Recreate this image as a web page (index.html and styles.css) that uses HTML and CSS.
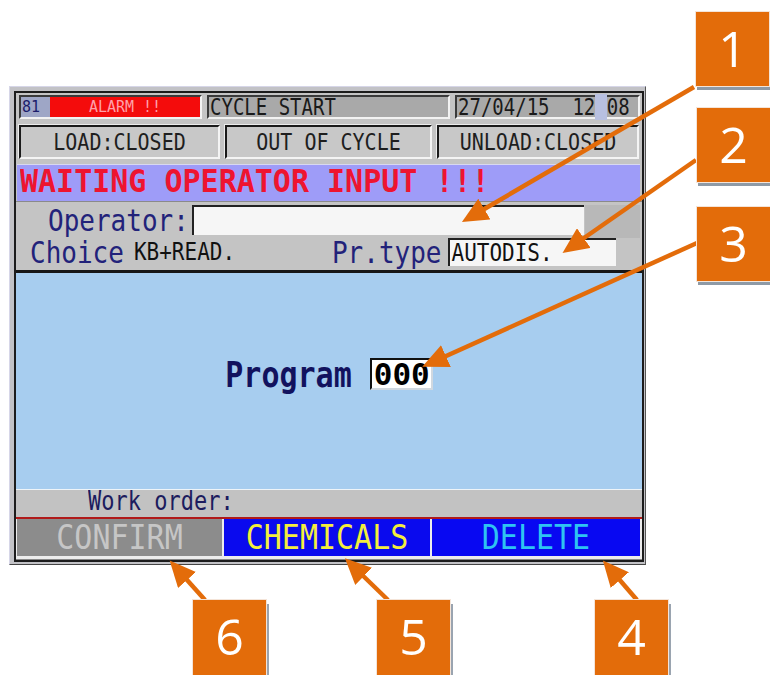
FILE: index.html
```html
<!DOCTYPE html>
<html lang="en">
<head>
	<meta charset="UTF-8">
	<title>Operator input</title>
	<link rel="stylesheet" href="styles.css">
</head>
<body>
	<div class="page">
		<div class="hmi">
			<div class="screen">
				<div class="status">
					<div class="cell cell-alarm"><span class="num">81</span><span class="alarm">ALARM !!</span></div>
					<div class="cell cell-cycle"><span class="tx">CYCLE START</span></div>
					<div class="cell cell-date"><span class="tx">27/04/15&nbsp; 12<span class="blink"> </span>08</span></div>
				</div>
				<div class="doors">
					<div class="door door-load"><span class="tx">LOAD:CLOSED</span></div>
					<div class="door door-cycle"><span class="tx">OUT OF CYCLE</span></div>
					<div class="door door-unload"><span class="tx">UNLOAD:CLOSED</span></div>
				</div>
				<div class="message"><span class="tx">WAITING OPERATOR INPUT !!!</span></div>
				<div class="operator">
					<span class="label tx">Operator:</span>
					<div class="field"></div>
					<div class="side"></div>
				</div>
				<div class="choice">
					<span class="label tx">Choice</span>
					<span class="value tx">KB+READ.</span>
					<span class="label ptype tx">Pr.type</span>
					<div class="field field-type"><span class="tx">AUTODIS.</span></div>
				</div>
				<div class="program">
					<span class="prog-label tx">Program</span>
					<span class="prog-box">000</span>
				</div>
				<div class="work"><span class="tx">Work order:</span></div>
				<div class="keys">
					<div class="key key-confirm"><span class="tx">CONFIRM</span></div>
					<div class="key key-chem"><span class="tx">CHEMICALS</span></div>
					<div class="key key-delete"><span class="tx">DELETE</span></div>
				</div>
			</div>
		</div>

		<!-- callouts -->
		<svg class="arrows" width="770" height="675" viewBox="0 0 770 675">
			<defs>
				<marker id="head" markerUnits="userSpaceOnUse" markerWidth="28" markerHeight="24" refX="12" refY="12" orient="auto">
					<path d="M0,0 L26,12 L0,24 z" fill="#e36c0a"/>
				</marker>
			</defs>
			<g stroke="#e36c0a" stroke-width="4.5" marker-end="url(#head)">
				<line x1="694" y1="87" x2="474" y2="215"/>
				<line x1="696" y1="160" x2="574" y2="245"/>
				<line x1="697" y1="243" x2="435" y2="361"/>
				<line x1="205" y1="600" x2="179" y2="571"/>
				<line x1="388" y1="600" x2="355" y2="568"/>
				<line x1="637" y1="600" x2="612" y2="571"/>
			</g>
		</svg>
		<div class="tag tag-1">1</div>
		<div class="tag tag-2">2</div>
		<div class="tag tag-3">3</div>
		<div class="tag tag-low tag-6">6</div>
		<div class="tag tag-low tag-5">5</div>
		<div class="tag tag-low tag-4">4</div>
	</div>
</body>
</html>
```

FILE: styles.css
```css
* {
	box-sizing: border-box;
}
body {
	margin: 0;
	background-color: #fff;
}
.page {
	position: relative;
	width: 770px;
	height: 675px;
	overflow: hidden;
	padding-top: 86px;
	padding-left: 9px;
	font-family: "DejaVu Sans Mono", "Liberation Mono", monospace;
}
.tx {
	display: inline-block;
	transform: scaleY(1.18);
}
.hmi {
	width: 637px;
	height: 479px;
	padding: 4px 1px 2px 4px;
	background-color: #c2c2c6;
	border: 1px solid #d6d6e8;
	border-right-color: #555;
	border-bottom-color: #444;
}
.screen {
	display: flex;
	flex-direction: column;
	height: 100%;
	border: 2px solid #1c1c1c;
	background-color: #c4c4c4;
}

/* top status line */
.status {
	display: flex;
	gap: 5px;
	height: 28px;
	padding: 2px 0 0 3px;
}
.cell {
	height: 24px;
	border: 2px solid;
	border-color: #3a3a3a #f2f2f2 #f2f2f2 #3a3a3a;
	font-size: 19px;
	line-height: 20px;
	color: #1a1a1a;
	white-space: pre;
}
.cell-alarm {
	display: flex;
	width: 183px;
}
.num {
	width: 29px;
	background-color: #9ea6c6;
	color: #1c1c6a;
	font-size: 15px;
	padding-left: 1px;
}
.alarm {
	flex: 1;
	background-color: #f40c0c;
	color: #ffa0a8;
	font-size: 15px;
	text-align: center;
}
.cell-cycle {
	width: 243px;
	background-color: #a9a9a9;
	padding-left: 1px;
}
.cell-date {
	width: 185px;
	background-color: #a9a9a9;
	padding-left: 1px;
}
.blink {
	background-color: #b8c0e0;
}

/* door states */
.doors {
	display: flex;
	gap: 5px;
	height: 41px;
	padding: 4px 0 0 3px;
}
.door {
	height: 34px;
	border: 2px solid;
	border-color: #1a1a1a #f4f4f4 #f4f4f4 #1a1a1a;
	box-shadow: -1px -1px 0 #ececec;
	background-color: #c8c8c8;
	font-size: 20px;
	line-height: 30px;
	text-align: center;
	color: #1e1e1e;
}
.door-load {
	width: 201px;
}
.door-cycle {
	width: 207px;
}
.door-unload {
	width: 202px;
}

.message {
	height: 37px;
	margin: 3px 2px 0 1px;
	padding-left: 3px;
	background-color: #9e9cf8;
	border-top: 1px solid #d8d8f0;
	color: #ee1430;
	font-size: 30px;
	font-weight: bold;
	line-height: 34px;
	white-space: pre;
}
.message .tx {
	transform: scaleY(1.05);
}

/* operator + choice */
.operator {
	display: flex;
	align-items: flex-start;
	height: 37px;
	padding: 3px 0 0 32px;
	border-top: 1px solid #8a8a8a;
}
.label {
	color: #22227a;
	font-size: 26px;
	line-height: 30px;
}
.operator .label {
	width: 144px;
}
.field {
	height: 30px;
	background-color: #f6f6f6;
	border-top: 2px solid #222;
	border-left: 2px solid #222;
}
.operator .field {
	width: 392px;
}
.side {
	width: 55px;
	height: 33px;
	margin-left: 1px;
	background-color: #b8b8b8;
}
.choice {
	display: flex;
	align-items: center;
	height: 35px;
	padding: 0 0 3px 14px;
	border-bottom: 3px solid #161616;
}
.value {
	margin-left: 10px;
	width: 198px;
	font-size: 21px;
	color: #111;
}
.field-type {
	width: 168px;
	height: 28px;
	margin-left: 6px;
	padding-left: 2px;
	font-size: 21px;
	line-height: 26px;
	color: #111;
}

/* program number */
.program {
	display: flex;
	align-items: center;
	justify-content: center;
	gap: 18px;
	height: 220px;
	padding-bottom: 14px;
	background-color: #a7cdef;
	border-bottom: 1px solid #eef4f8;
}
.prog-label {
	color: #12125e;
	font-size: 30px;
	font-weight: bold;
}
.prog-box {
	width: 63px;
	height: 32px;
	padding-left: 2px;
	background-color: #fff;
	border: 2px solid;
	border-color: #111 #d0d8e0 #d0d8e0 #111;
	color: #000;
	font-size: 31px;
	font-weight: bold;
	line-height: 28px;
}

.work {
	height: 29px;
	padding-left: 72px;
	background-color: #c2c2c2;
	border-bottom: 2px solid #b01a1a;
	color: #1c1c5e;
	font-size: 22px;
	line-height: 24px;
}

/* soft keys */
.keys {
	display: grid;
	grid-template-columns: 205px 206px 208px;
	gap: 2px;
	flex: 1;
	padding: 0 0 3px 1px;
	background-color: #ececec;
	border-bottom: 1px solid #888;
}
.key {
	font-size: 30px;
	line-height: 37px;
	text-align: center;
}
.key .tx {
	transform: scaleY(1.12);
}
.key-confirm {
	background-color: #8c8c8c;
	color: #c6c6c6;
}
.key-chem {
	background-color: #0a0aee;
	color: #f4ee3c;
}
.key-delete {
	background-color: #0808f2;
	color: #2ec4f2;
}

/* numbered callouts */
.arrows {
	position: absolute;
	left: 0;
	top: 0;
}
.tag {
	position: absolute;
	width: 75px;
	height: 76px;
	background-color: #e36c0a;
	border: 1px solid #f4e4d8;
	color: #fff;
	font-family: "Open Sans", "Liberation Sans", sans-serif;
	font-size: 50px;
	line-height: 72px;
	text-align: center;
	box-shadow: 1px 4px 0 -1px #8e9aa6;
}
.tag-1 {
	left: 695px;
	top: 11px;
}
.tag-2 {
	left: 696px;
	top: 107px;
}
.tag-3 {
	left: 696px;
	top: 206px;
}
.tag-low {
	top: 599px;
	height: 80px;
	box-shadow: 3px 4px 0 -1px #9aa4b0;
}
.tag-6 {
	left: 192px;
}
.tag-5 {
	left: 376px;
}
.tag-4 {
	left: 594px;
}
```
